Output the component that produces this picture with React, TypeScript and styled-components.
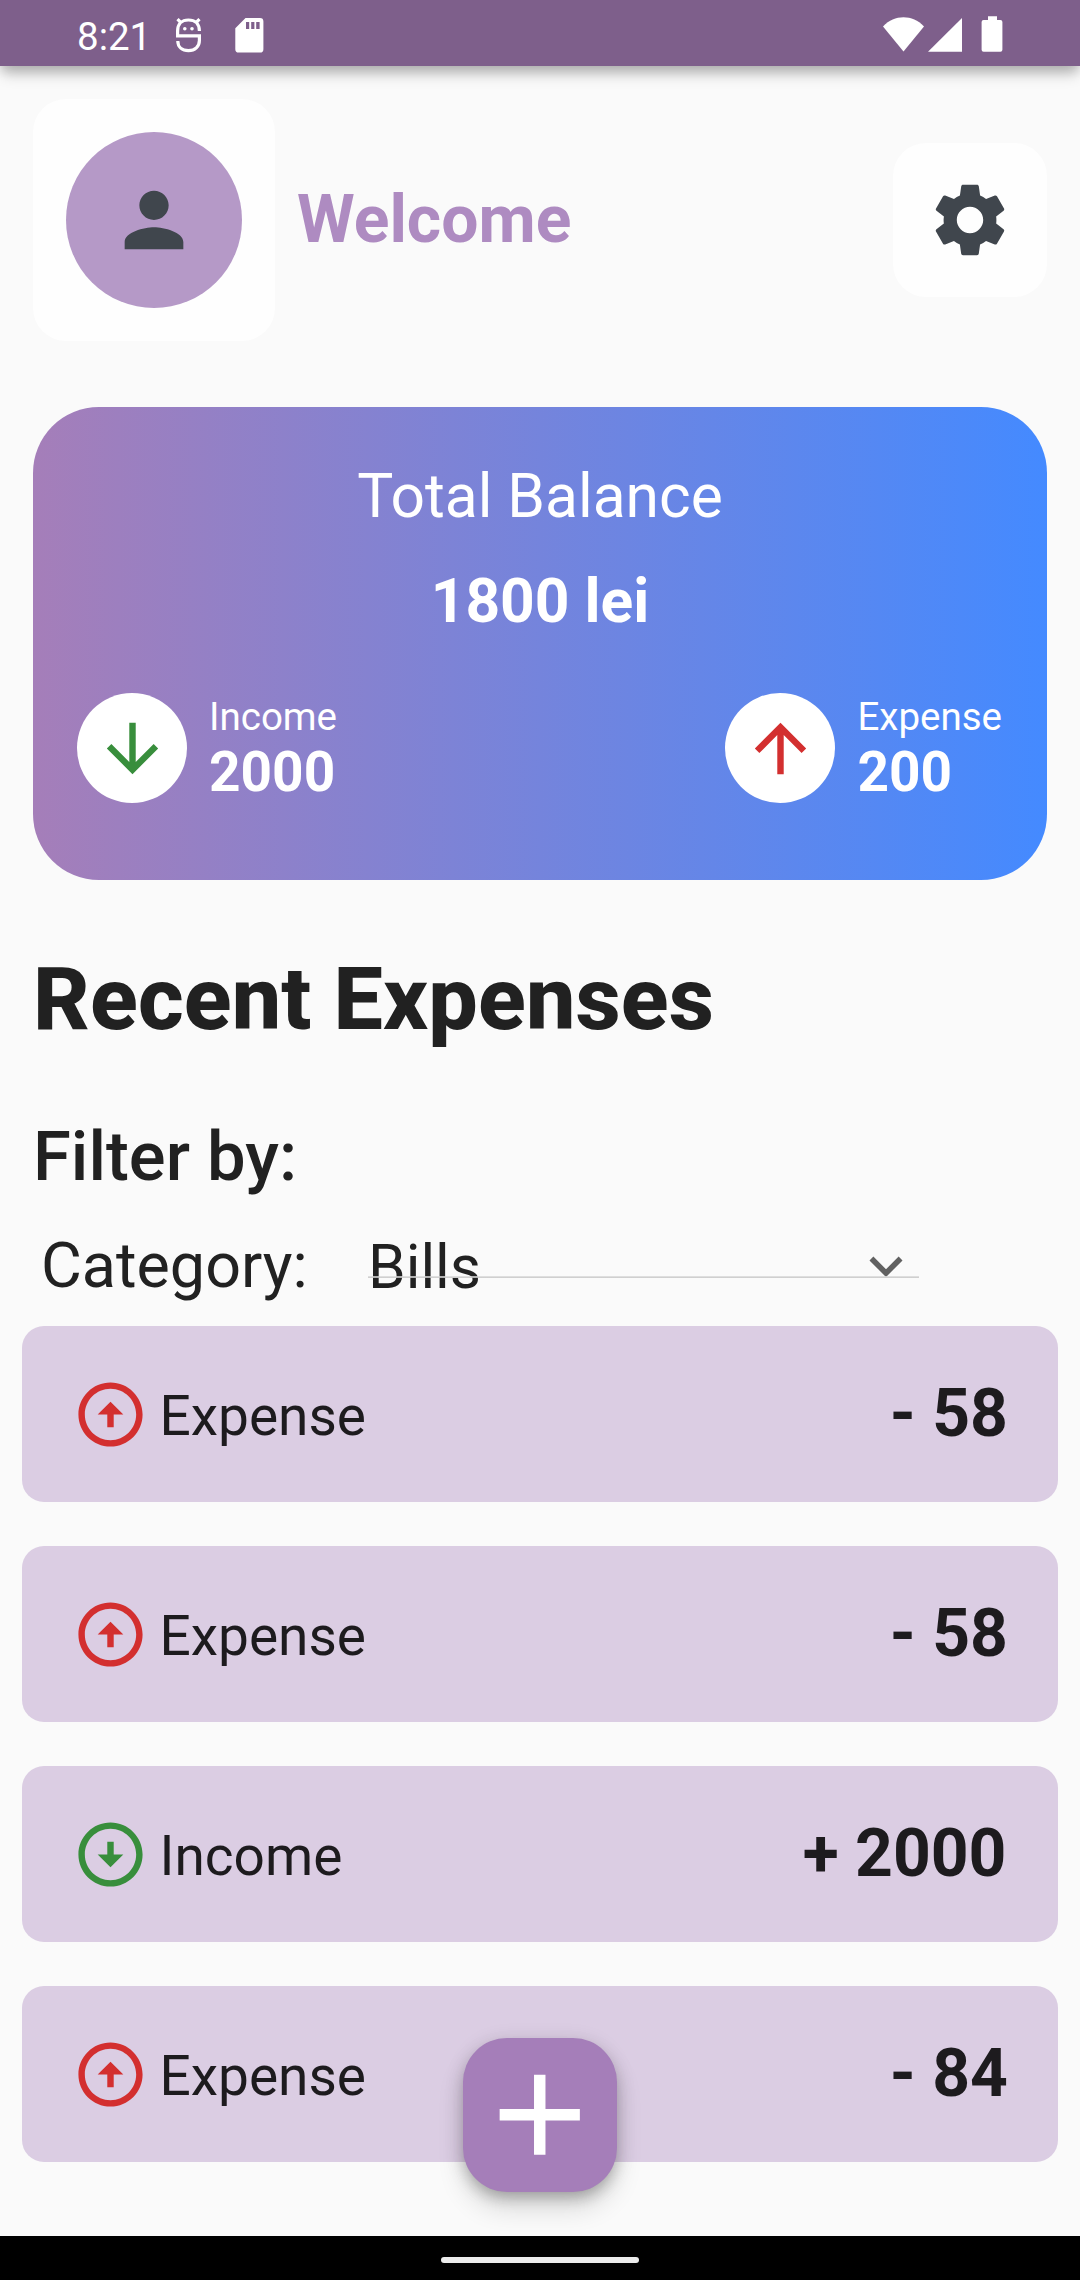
import React from "react";
import styled, { createGlobalStyle } from "styled-components";

const GlobalStyle = createGlobalStyle`
  * { box-sizing: border-box; }
  body { margin: 0; background: #fafafa; }
`;

const Screen = styled.div`
  position: relative;
  width: 1080px;
  height: 2280px;
  overflow: hidden;
  display: flex;
  flex-direction: column;
  background: #fafafa;
  color: #212121;
  font-family: Roboto, sans-serif;
`;

const StatusBar = styled.header`
  flex: none;
  height: 66px;
  padding: 5px 74px 0 77px;
  display: flex;
  align-items: center;
  background: #7e5f8b;
  color: #fff;
  box-shadow: 0 11px 14px -3px rgba(0, 0, 0, 0.2), 0 5px 10px rgba(0, 0, 0, 0.14);
`;

const Clock = styled.span`
  font-size: 38.5px;
  line-height: 46px;
  margin: 2px 24px 0 0;
`;

const StatusIcons = styled.div<{ $push?: boolean }>`
  display: flex;
  align-items: center;
  margin-left: ${(p) => (p.$push ? "auto" : "0")};
`;

const Main = styled.main`
  flex: 1;
  min-height: 0;
  display: flex;
  flex-direction: column;
  padding: 33px 22px 0;
`;

const TopRow = styled.div`
  display: flex;
  align-items: center;
  gap: 22px;
  height: 242px;
  margin: 0 11px 66px;
`;

const Tile = styled.div<{ $size: number }>`
  flex: none;
  width: ${(p) => p.$size}px;
  height: ${(p) => p.$size}px;
  border-radius: 33px;
  background: #fefefe;
  display: flex;
  align-items: center;
  justify-content: center;
`;

const Avatar = styled.div`
  width: 176px;
  height: 176px;
  border-radius: 50%;
  background: #b599c7;
  display: flex;
  align-items: center;
  justify-content: center;
`;

const Welcome = styled.h1`
  flex: 1;
  margin: 0;
  font-size: 66px;
  line-height: 78px;
  font-weight: 700;
  color: #ae8bc1;
`;

const BalanceCard = styled.section`
  flex: none;
  height: 473px;
  margin: 0 11px;
  padding: 54px 44px 0;
  border-radius: 66px;
  background: linear-gradient(90deg, #a57eb9, #448aff);
  color: #fff;
  display: flex;
  flex-direction: column;
`;

const BalanceLine = styled.div<{ $bold?: boolean }>`
  font-size: 60.5px;
  line-height: 71px;
  font-weight: ${(p) => (p.$bold ? 700 : 400)};
  text-align: center;
  margin-bottom: 34px;
`;

const Flows = styled.div`
  display: flex;
  justify-content: space-between;
  margin: 22px 1px 0 0;
`;

const Flow = styled.div`
  display: flex;
  align-items: flex-start;
  gap: 22px;
`;

const FlowBadge = styled.div`
  width: 110px;
  height: 110px;
  border-radius: 50%;
  background: #fff;
  display: flex;
  align-items: center;
  justify-content: center;
`;

const FlowText = styled.div`
  padding-top: 1px;
`;

const FlowLabel = styled.div`
  font-size: 38.5px;
  line-height: 45px;
`;

const FlowValue = styled.div`
  font-size: 55px;
  line-height: 66px;
  font-weight: 700;
`;

const Title = styled.h2`
  margin: 67px 11px 0;
  font-size: 88px;
  line-height: 104px;
  font-weight: 800;
  letter-spacing: 0.14px;
`;

const FilterTitle = styled.h3`
  margin: 65px 11px 0;
  font-size: 68.75px;
  line-height: 82px;
  font-weight: 500;
`;

const FilterRow = styled.div`
  display: flex;
  align-items: center;
  height: 128px;
  padding: 8px 0 0 19px;
  font-size: 60.5px;
  line-height: 72px;
`;

const FilterLabel = styled.span`
  width: 327px;
  font-size: 62.8px;
`;

const Select = styled.div`
  position: relative;
  width: 551px;
  height: 72px;
  display: flex;
  align-items: center;
  justify-content: space-between;
`;

const SelectValue = styled.span`
  margin-top: 3px;
`;

const Underline = styled.div`
  position: absolute;
  left: 0;
  right: 0;
  top: 46px;
  height: 2px;
  background: linear-gradient(rgba(215, 215, 215, 0.8) 50%, rgba(200, 200, 200, 0.85) 50%);
`;

const List = styled.ul`
  list-style: none;
  margin: 0;
  padding: 0;
  display: flex;
  flex-direction: column;
  gap: 44px;
`;

const Item = styled.li`
  height: 176px;
  border-radius: 22px;
  padding: 0 50px 0 49.5px;
  background: #dbcde3;
  color: #1d1b1e;
  display: flex;
  align-items: center;
`;

const ItemName = styled.span`
  flex: 1;
  margin: 4px 0 0 11px;
  font-size: 55px;
  line-height: 66px;
`;

const ItemAmount = styled.span<{ $income: boolean }>`
  margin-right: ${(p) => (p.$income ? 1.5 : 0)}px;
  font-size: 66px;
  line-height: 78px;
  font-weight: 700;
`;

const Fab = styled.button`
  position: absolute;
  left: 463px;
  top: 2038px;
  width: 154px;
  height: 154px;
  padding: 0;
  border: 0;
  border-radius: 44px;
  background: #a57eb9;
  display: flex;
  align-items: center;
  justify-content: center;
  box-shadow: 0 8px 14px -3px rgba(0, 0, 0, 0.2), 0 16px 27px rgba(0, 0, 0, 0.14),
    0 3px 20px rgba(0, 0, 0, 0.12);
`;

const NavBar = styled.footer`
  flex: none;
  height: 44px;
  background: #000;
  display: flex;
  align-items: center;
  justify-content: center;
  padding-top: 4px;
`;

const Pill = styled.div`
  width: 198px;
  height: 6px;
  border-radius: 3px;
  background: #ececec;
`;

const Glyph = styled.svg<{ $size: number }>`
  display: block;
  flex: none;
  width: ${(p) => p.$size}px;
  height: ${(p) => p.$size}px;
`;

const paths = {
  person:
    "M12 12c2.21 0 4-1.79 4-4s-1.79-4-4-4-4 1.79-4 4 1.79 4 4 4zm0 2c-2.67 0-8 1.34-8 4v2h16v-2c0-2.66-5.33-4-8-4z",
  settings:
    "M19.14 12.94c.04-.3.06-.61.06-.94 0-.32-.02-.64-.07-.94l2.03-1.58c.18-.14.23-.41.12-.61l-1.92-3.32c-.12-.22-.37-.29-.59-.22l-2.39.96c-.5-.38-1.03-.7-1.62-.94l-.36-2.54c-.04-.24-.24-.41-.48-.41h-3.84c-.24 0-.43.17-.47.41l-.36 2.54c-.59.24-1.13.57-1.62.94l-2.39-.96c-.22-.08-.47 0-.59.22L2.74 8.87c-.12.21-.08.47.12.61l2.03 1.58c-.05.3-.09.63-.09.94s.02.64.07.94l-2.03 1.58c-.18.14-.23.41-.12.61l1.92 3.32c.12.22.37.29.59.22l2.39-.96c.5.38 1.03.7 1.62.94l.36 2.54c.05.24.24.41.48.41h3.84c.24 0 .44-.17.47-.41l.36-2.54c.59-.24 1.13-.56 1.62-.94l2.39.96c.22.08.47 0 .59-.22l1.92-3.32c.12-.22.07-.47-.12-.61l-2.01-1.58zM12 15.6c-1.98 0-3.6-1.62-3.6-3.6s1.62-3.6 3.6-3.6 3.6 1.62 3.6 3.6-1.62 3.6-3.6 3.6z",
  down: "M20 12l-1.41-1.41L13 16.17V4h-2v12.17l-5.58-5.59L4 12l8 8 8-8z",
  up: "M4 12l1.41 1.41L11 7.83V20h2V7.83l5.58 5.59L20 12l-8-8-8 8z",
  chevron: "M7.41 8.59L12 13.17l4.59-4.58L18 10l-6 6-6-6z",
  circleUp:
    "M12 20c-4.41 0-8-3.59-8-8s3.59-8 8-8 8 3.59 8 8-3.59 8-8 8m0 2c5.52 0 10-4.48 10-10S17.52 2 12 2 2 6.48 2 12s4.48 10 10 10zm-1-10v4h2v-4h3l-4-4-4 4h3z",
  circleDown:
    "M12 4c4.41 0 8 3.59 8 8s-3.59 8-8 8-8-3.59-8-8 3.59-8 8-8m0-2C6.48 2 2 6.48 2 12s4.48 10 10 10 10-4.48 10-10S17.52 2 12 2zm1 10V8h-2v4H8l4 4 4-4h-3z",
  add: "M19 13h-6v6h-2v-6H5v-2h6V5h2v6h6v2z",
};

type IconProps = { name: keyof typeof paths; size: number; color: string };

const Icon = ({ name, size, color }: IconProps) => (
  <Glyph $size={size} viewBox="0 0 24 24" fill={color}>
    <path d={paths[name]} />
  </Glyph>
);

const RED = "#d32f2f";
const GREEN = "#388e3c";
const SLATE = "#40464d";

const items = [
  { income: false, amount: 58 },
  { income: false, amount: 58 },
  { income: true, amount: 2000 },
  { income: false, amount: 84 },
];

const FlowSummary = ({ income, value }: { income: boolean; value: number }) => (
  <Flow>
    <FlowBadge>
      <Icon name={income ? "down" : "up"} size={77} color={income ? GREEN : RED} />
    </FlowBadge>
    <FlowText>
      <FlowLabel>{income ? "Income" : "Expense"}</FlowLabel>
      <FlowValue>{value}</FlowValue>
    </FlowText>
  </Flow>
);

export default function App() {
  return (
    <Screen>
      <GlobalStyle />
      <StatusBar>
        <Clock>8:21</Clock>
        <StatusIcons>
          <svg width="100" height="40" viewBox="175 16 100 40">
            <g fill="none" stroke="#fff" strokeWidth="3.2">
              <path d="M199.400 31c0-7-4.400-11-11-11s-10.800 4-10.800 11v4.800h21.800v4.700c0 6-4.500 10.200-10.900 10.200S177.800 47 177.800 41" />
              <path d="M177.500 19.200l3.800 3.800M199.500 19.200l-3.800 3.800" />
            </g>
            <circle cx="184.800" cy="28.800" r="1.800" fill="#fff" />
            <circle cx="192" cy="28.800" r="1.800" fill="#fff" />
            <path
              fill="#fff"
              fillRule="evenodd"
              d="M245.500 18H260a3.400 3.400 0 0 1 3.400 3.400v27.800a3.400 3.400 0 0 1-3.400 3.400h-21.300a3.400 3.400 0 0 1-3.400-3.400V28.300zM246 22v7h3.200v-7zm5.200 0v7h3.200v-7zm5 0v7h3.400v-7z"
            />
          </svg>
        </StatusIcons>
        <StatusIcons $push>
          <svg width="126" height="40" viewBox="880 16 126 40" fill="#fff">
            <path d="M903.500 51.500L883 26.500C889 20 896 17.300 903.500 17.300S918 20 924 26.500z" />
            <path d="M928 51.700L962 18v33.700z" />
            <path d="M988 16.300h9v3.700h3.400a2 2 0 0 1 2 2v27.700a2 2 0 0 1-2 2h-16.800a2 2 0 0 1-2-2V22a2 2 0 0 1 2-2h4.400z" />
          </svg>
        </StatusIcons>
      </StatusBar>
      <Main>
        <TopRow>
          <Tile $size={242}>
            <Avatar>
              <Icon name="person" size={88} color={SLATE} />
            </Avatar>
          </Tile>
          <Welcome>Welcome</Welcome>
          <Tile $size={154}>
            <Icon name="settings" size={88} color={SLATE} />
          </Tile>
        </TopRow>
        <BalanceCard>
          <BalanceLine>Total Balance</BalanceLine>
          <BalanceLine $bold>1800 lei</BalanceLine>
          <Flows>
            <FlowSummary income value={2000} />
            <FlowSummary income={false} value={200} />
          </Flows>
        </BalanceCard>
        <Title>Recent Expenses</Title>
        <FilterTitle>Filter by:</FilterTitle>
        <FilterRow>
          <FilterLabel>Category:</FilterLabel>
          <Select>
            <SelectValue>Bills</SelectValue>
            <Icon name="chevron" size={66} color="#616161" />
            <Underline />
          </Select>
        </FilterRow>
        <List>
          {items.map((item, i) => (
            <Item key={i}>
              <Icon
                name={item.income ? "circleDown" : "circleUp"}
                size={77}
                color={item.income ? GREEN : RED}
              />
              <ItemName>{item.income ? "Income" : "Expense"}</ItemName>
              <ItemAmount $income={item.income}>
                {`${item.income ? "+" : "-"} ${item.amount}`}
              </ItemAmount>
            </Item>
          ))}
        </List>
      </Main>
      <Fab aria-label="Add">
        <Icon name="add" size={137.5} color="#fff" />
      </Fab>
      <NavBar>
        <Pill />
      </NavBar>
    </Screen>
  );
}
